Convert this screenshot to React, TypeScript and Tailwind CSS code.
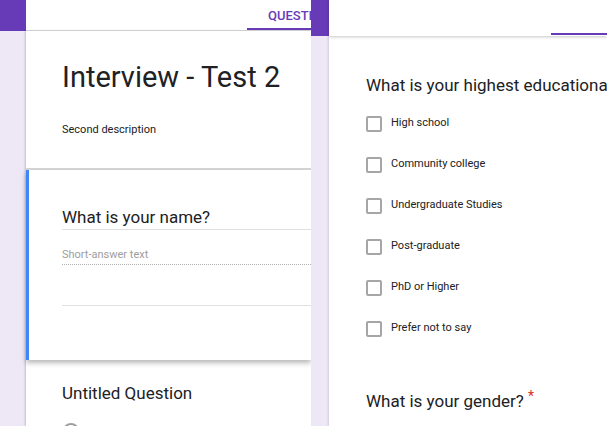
const options = [
  "High school",
  "Community college",
  "Undergraduate Studies",
  "Post-graduate",
  "PhD or Higher",
  "Prefer not to say",
];

function LeftPanel() {
  return (
    <div className="w-[311px] shrink-0 flex flex-col overflow-hidden">
      {/* Top bar with tab */}
      <div className="flex h-[31px] shrink-0">
        <div className="w-[26px] bg-[#673ab7]" />
        <div className="flex-1 bg-white border-b border-[#dadce0] flex justify-end">
          <div className="w-[64px] h-[30px] border-b-2 border-[#673ab7] pl-[21px] pt-[3px] overflow-hidden">
            <span className="text-[13px] leading-[13px] font-medium text-[#673ab7] whitespace-nowrap">
              QUESTIONS
            </span>
          </div>
        </div>
      </div>

      <div className="flex flex-1 min-h-0">
        <div className="w-[26px] shrink-0" />
        <div className="flex-1 min-w-0 flex flex-col shadow-[-1px_0_2px_rgba(0,0,0,0.18)]">
          {/* Title card */}
          <div className="h-[139px] shrink-0 bg-white border-b-2 border-[#d6d6d6] pl-[36px] pt-[28px]">
            <h1 className="text-[29px] leading-[36px] text-[#202124] whitespace-nowrap">Interview - Test 2</h1>
            <p className="mt-[27px] text-[11px] leading-[16px] text-[#202124]">Second description</p>
          </div>

          {/* Active question card */}
          <div className="relative z-10 h-[190px] shrink-0 bg-white border-l-[3px] border-[#4285f4] pl-[33px] pt-[35px] shadow-[0_3px_5px_rgba(0,0,0,0.28)]">
            <div className="text-[17px] leading-[24px] text-[#202124] border-b border-[#e0e0e0] whitespace-nowrap">
              What is your name?
            </div>
            <div className="mt-[16px] text-[11px] leading-[18px] text-[#9e9e9e] border-b border-dotted border-[#b0b0b0]">
              Short-answer text
            </div>
            <div className="mt-[40px] border-b border-[#e0e0e0]" />
          </div>

          {/* Next question */}
          <div className="flex-1 bg-white pl-[36px] pt-[21px]">
            <div className="text-[17px] leading-[24px] text-[#202124] whitespace-nowrap">Untitled Question</div>
            <div className="mt-[18px] ml-[1px] w-4 h-4 rounded-full border-2 border-[#9e9e9e]" />
          </div>
        </div>
      </div>
    </div>
  );
}

function RightPanel() {
  return (
    <div className="flex-1 min-w-0 flex flex-col overflow-hidden">
      <div className="relative z-10 flex h-[36px] shrink-0">
        <div className="w-[18px] bg-[#673ab7]" />
        <div className="flex-1 bg-white flex justify-end items-end shadow-[0_1px_3px_rgba(0,0,0,0.22)]">
          <div className="w-[56px] h-[2px] mb-[1px] bg-[#673ab7]" />
        </div>
      </div>

      <div className="flex flex-1 min-h-0">
        <div className="w-[18px] shrink-0" />
        <div className="flex-1 min-w-0 bg-white pl-[37px] pt-[37px] shadow-[-1px_0_2px_rgba(0,0,0,0.12)]">
          <div className="text-[17px] leading-[24px] text-[#202124] whitespace-nowrap">
            What is your highest educational level?
          </div>
          <div className="mt-[6px]">
            {options.map((o) => (
              <div key={o} className="h-[41px] flex items-center">
                <div className="w-4 h-4 rounded-[2px] border-2 border-[#a6a6a6] shrink-0" />
                <span className="ml-[9px] text-[11px] text-[#202124] whitespace-nowrap">{o}</span>
              </div>
            ))}
          </div>
          <div className="mt-[40px] text-[17px] leading-[24px] text-[#202124] whitespace-nowrap">
            What is your gender?
            <span className="ml-[4px] align-top text-[14px] leading-[14px] text-[#d93025]">*</span>
          </div>
        </div>
      </div>
    </div>
  );
}

export default function App() {
  return (
    <div className="w-[607px] h-[426px] flex overflow-hidden bg-[#ede7f6] font-['Roboto',sans-serif]">
      <LeftPanel />
      <RightPanel />
    </div>
  );
}
